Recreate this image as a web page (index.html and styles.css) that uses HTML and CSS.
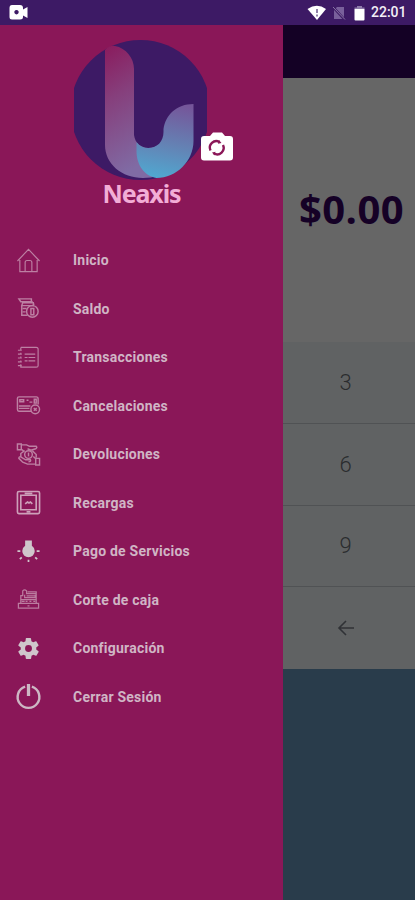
FILE: index.html
```html
<!DOCTYPE html>
<html lang="es">
<head>
<meta charset="utf-8">
<meta name="viewport" content="width=device-width">
<title>Neaxis</title>
<link rel="stylesheet" href="styles.css">
</head>
<body>
<header class="status">
  <svg class="cam" width="20" height="15" viewBox="0 0 20 15"><path fill="#fff" fill-rule="evenodd" d="M3 0h8q3 0 3 3v1.500l4.500-2.500v11L14 10.500V12q0 2.500-3 2.500H3Q.5 14.500.5 12V3Q.5 0 3 0zM7.500 5a2.200 2.200 0 1 0 .01 0z"/></svg>
  <div class="status-right">
    <svg width="20" height="16" viewBox="0 0 20 16"><path fill="#fff" d="M.5 4Q10-2.500 19 4L10 15z"/><path stroke="#6d588d" stroke-width="1.500" d="M10 4v4m0 1.500v2"/></svg>
    <svg class="sim" width="14" height="14" viewBox="0 0 14 14"><path fill="#79609b" d="M5 1h7v12H2V4z"/><path stroke="#3d1a65" stroke-width="2.500" d="M0 0l13 14"/><path stroke="#8a76a5" d="M1 1l12 12.500"/></svg>
    <svg class="battery" width="11" height="16" viewBox="0 0 11 16"><path fill="#8e7baa" d="M3 1h5v1.500h2.500V4H.5V2.500H3z"/><path fill="#fff" d="M.5 4h10v10.500q0 1-1 1h-8q-1 0-1-1z"/></svg>
    <span class="clock">22:01</span>
  </div>
</header>
<div class="screen">
  <nav class="drawer">
    <div class="profile">
      <svg class="logo" width="160" height="142" viewBox="74 39 160 142">
        <defs>
          <clipPath id="disc"><path d="M74 39h133v142H74z"/></clipPath>
          <linearGradient id="stem" x1="0" y1="0" x2=".25" y2="1"><stop offset="0" stop-color="#8a1b5d"/><stop offset=".4" stop-color="#863f7c"/><stop offset="1" stop-color="#806ba4"/></linearGradient>
          <linearGradient id="arm" x1=".65" y1="0" x2=".5" y2="1"><stop offset="0" stop-color="#75569a"/><stop offset=".55" stop-color="#6482b4"/><stop offset="1" stop-color="#51a6cf"/></linearGradient>
        </defs>
        <ellipse cx="140.500" cy="110" rx="70" ry="70" fill="#3d1a65" clip-path="url(#disc)"/>
        <path fill="url(#stem)" d="M105 50q5-5 10-4c11 2 19 12 19 23v66c1 8 7 13 14 13 4 0 8-1 10-3l0 31q-7 2-15 2c-21 0-38-14-38-33z"/>
        <path fill="url(#arm)" d="M193.500 104v37c0 20-17 37-37 37-12-2-20-13-20-27v-9c3 4 7 6 12 6 9 0 15-7 15-16v-3c2-14 13-25 30-25z"/>
        <path fill="#fff" d="M204 136h6l3-3.500h9l3 3.500h5q3 0 3 3v18.500q0 3-3 3h-26q-3 0-3-3V139q0-3 3-3z"/>
        <g fill="none" stroke="#8b1758" stroke-width="2.400"><path d="M210.500 150.500a6.500 6.500 0 0 1 9-8.500"/><path d="M223 145a6.500 6.500 0 0 1-9 8.500"/></g>
        <path fill="#8b1758" d="M219 140l2.500 3-3.500.8zM214.500 155.500l-2.500-3 3.500-.8z"/>
      </svg>
      <div class="brand">Neaxis</div>
    </div>
    <ul class="menu">
      <li><svg class="icon" viewBox="0 0 26 26"><path d="M1.500 13.500L13 1.500l11.500 12M4 12.500v12h18v-12M9.500 24V15q0-2 2-2h3q2 0 2 2v9"/></svg>Inicio</li>
      <li><svg class="icon bold" viewBox="0 0 26 26"><path d="M3 3h13v3H5zM7 7h11v3H6zM6 10v10h6M7 13h4m-4 3.500h3M16 5l3 4"/><circle cx="17" cy="16" r="6"/><path d="M15.500 13h3v6.500h-3z"/></svg>Saldo</li>
      <li><svg class="icon" viewBox="0 0 26 26"><path d="M5 2.500h16q2 0 2 2v17q0 1.500-2 1.500H5V20m0-3v-1m0-3v-1m0-3V8m0-3V2.500M2 5.500h4M2 9.500h4m-4 4h4m-4 4h4m-4 4h4M9 9.500h11M9 13h3m1 0h7M9 16.500h3m1 0h7"/></svg>Transacciones</li>
      <li><svg class="icon bold" viewBox="0 0 26 26"><path d="M16 19H3q-1.500 0-1.500-2V5.500Q1.500 4 3 4h18q2 0 2 2v6M3 13.500h12M3 16h11M4 7h4v2H4zM11 7.500h2m1 2h3m2-3h2v4h-2z"/><circle cx="20" cy="17" r="4.500"/><path d="M18.500 15.500l3 3m0-3l-3 3"/></svg>Cancelaciones</li>
      <li><svg class="icon bold" viewBox="0 0 26 26"><path d="M1.500 2h4v6h-4zM6 3h5l3 1.500h7q1.500 1.500-.5 2.500l-5 1.500L12 7M6 8l3 2M24.500 24h-4v-7h4zM20 23h-8l-5-2-4-4q0-2 2-1.500l5 3h5q1 2-2 2M20 17l-2-2M5 15v-3l4-3m8 0l4 4v3"/><circle cx="13" cy="13" r="4"/><path d="M13 11v4"/></svg>Devoluciones</li>
      <li><svg class="icon tablet" viewBox="0 0 26 26"><rect x="1.500" y="1.500" width="23" height="23" rx="1.500"/><path d="M5 5.500h16v15H5zM9 3.500h8M11 22.700h4M9.500 14.500l2.500-2 1.500 1 1.500-1 2 2"/></svg>Recargas</li>
      <li><svg class="icon solid" viewBox="0 0 26 26"><path d="M9.500 1.500h7v5.500q3 2 3 5.500a6.500 6.500 0 0 1-13 0q0-3.500 3-5.500z"/><path class="ray" d="M1.500 12.500h3M21.500 12.500h3M4 21l2-2M22 21l-2-2M13 21.500v2.500"/></svg>Pago de Servicios</li>
      <li><svg class="icon register" viewBox="0 0 26 26"><path d="M5 17V9h2V4q2-2 4 0v3h10v10M9 8v3h11V8M2.500 17h21v5h-21zM12 19.500h2M5 13h16M6 15h3m1 0h2m2 0h2m2 0h2M12 5h9v2M11 9.300h9"/></svg>Corte de caja</li>
      <li><svg class="icon solid" viewBox="0 0 24 24"><path d="M19.400 13c0-.3.100-.6.100-1s0-.7-.1-1l2.100-1.700c.2-.1.200-.4.100-.6l-2-3.500c-.1-.2-.4-.3-.6-.2l-2.500 1c-.5-.4-1.100-.7-1.700-1l-.4-2.600a.5.500 0 0 0-.5-.4h-4c-.2 0-.5.200-.5.400L9.100 5c-.6.300-1.200.6-1.700 1L4.900 5c-.2-.1-.5 0-.6.200l-2 3.500c-.1.200-.1.500.1.600L4.600 11a8 8 0 0 0 0 2l-2.200 1.700c-.2.100-.2.400-.1.600l2 3.500c.1.200.4.300.6.200l2.500-1c.5.400 1.100.7 1.700 1l.3 2.600c.1.200.3.400.6.400h4c.2 0 .5-.2.500-.4l.4-2.600c.6-.3 1.200-.6 1.700-1l2.500 1c.2.100.5 0 .6-.2l2-3.500c.1-.2.100-.5-.1-.6zM12 15.300a3.300 3.300 0 1 1 0-6.600 3.300 3.300 0 0 1 0 6.600z"/></svg>Configuración</li>
      <li><svg class="icon power" viewBox="0 0 26 26"><path d="M9.500 2.800a11.300 11.300 0 1 0 7 0"/><path class="bar" d="M13 0v12.500"/></svg>Cerrar Sesión</li>
    </ul>
  </nav>
  <main class="terminal">
    <div class="toolbar"></div>
    <div class="amount">$0.00</div>
    <div class="keys">
      <div class="key">3</div>
      <div class="key">6</div>
      <div class="key">9</div>
      <div class="key"><svg width="18" height="16" viewBox="0 0 18 16"><path fill="none" stroke="#303236" stroke-width="1.600" d="M17 8H2m7-7L2 8l7 7"/></svg></div>
    </div>
    <div class="charge"></div>
  </main>
</div>
</body>
</html>
```
FILE: styles.css
```css
* { box-sizing: border-box; }

body {
  margin: 0;
  width: 415px;
  height: 900px;
  overflow: hidden;
  font-family: Roboto, "Liberation Sans", sans-serif;
}

.status {
  height: 25px;
  padding: 0 8px 0 9px;
  display: flex;
  align-items: center;
  justify-content: space-between;
  background: #3d1a65;
}

.status svg { display: block; }

.status-right { display: flex; align-items: center; }

.sim { margin-left: 5px; }

.battery { margin-left: 8px; }

.clock {
  margin-left: 6px;
  width: 36px;
  color: #f3eff7;
  font-size: 14px;
  font-weight: 500;
  line-height: 27px;
  white-space: nowrap;
}

.screen { display: flex; height: 875px; }

.drawer { width: 283px; background: #8a1758; }

.profile { height: 211px; padding-top: 14px; }

.logo { display: block; margin-left: 74px; }

.brand {
  width: 283px;
  margin-top: -3px;
  text-align: center;
  font: 700 25px/30px "Noto Sans", sans-serif;
  letter-spacing: -1.1px;
  color: #f2add6;
}

.menu { list-style: none; margin: 0; padding: 0; }

.menu li {
  height: 48.5px;
  padding-left: 16px;
  display: flex;
  align-items: center;
  gap: 32px;
  color: #d0b5c5;
  font-size: 14px;
  font-weight: 700;
  letter-spacing: 0.23px;
}

.icon {
  width: 25px;
  height: 25px;
  flex: none;
  fill: none;
  stroke: #bd80a3;
  stroke-width: 1.2;
}

.bold { stroke-width: 1.5; }

.tablet { stroke: #cda0b9; stroke-width: 1.7; }

.register { stroke: #bb7c9f; stroke-width: 1.3; }

.solid { fill: #cfc6cb; stroke: none; }

.ray { stroke: #cfc6cb; stroke-width: 1.8; }

.power { stroke: #cdb7c4; stroke-width: 2.5; overflow: visible; }

.bar { stroke-width: 3.4; }

.terminal { flex: 1; display: flex; flex-direction: column; background: #666; }

.toolbar { height: 53px; background: #140125; }

.amount {
  height: 264px;
  padding: 0 0 3px 5px;
  display: flex;
  align-items: center;
  justify-content: center;
  font: 700 40px/1 "Open Sans", sans-serif;
  letter-spacing: 0.4px;
  color: #150126;
}

.keys { background: #606263; }

.key {
  height: 81.75px;
  padding-right: 7px;
  display: flex;
  align-items: center;
  justify-content: center;
  border-bottom: 1px solid #505254;
  color: #2a2c2e;
  font-size: 22px;
  font-weight: 300;
}

.key:last-child { border-bottom: 0; }

.charge { flex: 1; background: #293c4b; }
```
